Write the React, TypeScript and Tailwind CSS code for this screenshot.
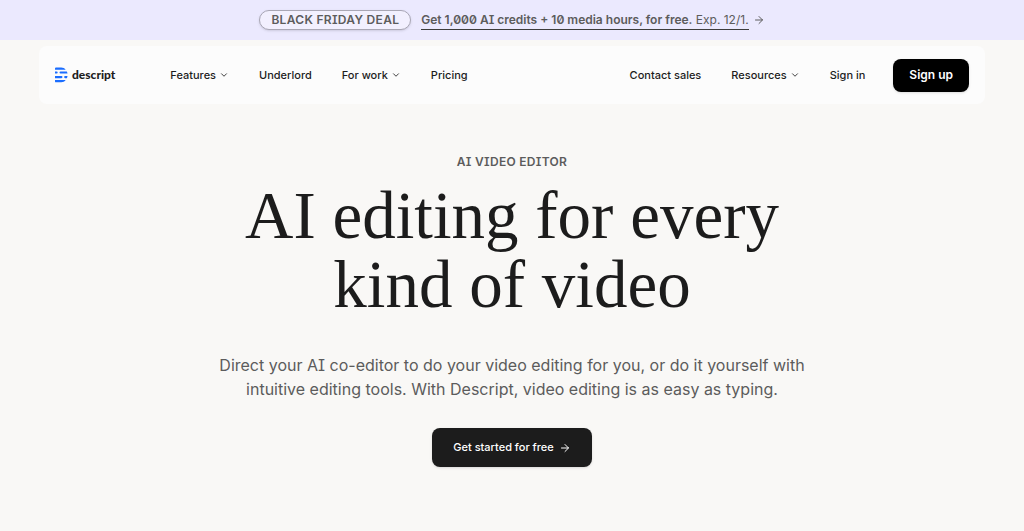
import { ArrowRight, ChevronDown } from "lucide-react";

type NavItem = { label: string; menu?: boolean };

const mainNav: NavItem[] = [
    { label: "Features", menu: true },
    { label: "Underlord" },
    { label: "For work", menu: true },
    { label: "Pricing" },
];

const accountNav: NavItem[] = [
    { label: "Contact sales" },
    { label: "Resources", menu: true },
    { label: "Sign in" },
];

function Logo() {
    return (
        <a href="#" className="flex items-center gap-1 text-[#1c1c1c]">
            <svg viewBox="0 0 13 16" className="h-4 w-[13px]" fill="#1a6dff" aria-hidden="true">
                <path d="M0 1.4C0 .8.4.5 1 .5h5.2c1.9 0 3.4.8 4.500 2.200H0z" />
                <path d="M0 4.400h1.600a1.100 1.100 0 0 1 0 2.200H0zM5.600 4.400h6.200c.4.700.6 1.400.7 2.200H5.600a1.100 1.100 0 0 1 0-2.200z" />
                <path d="M0 9h6.400a1.100 1.100 0 0 1 0 2.200H0zM10.200 9h2.300c-.1.800-.3 1.500-.7 2.200h-1.600a1.100 1.100 0 0 1 0-2.200z" />
                <path d="M0 13.100h10.700c-1.100 1.400-2.600 2.200-4.500 2.200H1c-.6 0-1-.3-1-.9z" />
            </svg>
            <span className="font-[Lato,sans-serif] text-xs leading-4 font-black">descript</span>
        </a>
    );
}

function NavLinks({ items }: { items: NavItem[] }) {
    return (
        <ul className="flex items-center gap-[30px]">
            {items.map((item) => (
                <li key={item.label}>
                    {item.menu ? (
                        <button type="button" className="flex items-center gap-[3px]">
                            {item.label}
                            <ChevronDown className="size-[10px]" />
                        </button>
                    ) : (
                        <a href="#">{item.label}</a>
                    )}
                </li>
            ))}
        </ul>
    );
}

export default function App() {
    return (
        <div className="min-h-screen bg-[#f9f8f6] font-[Inter,sans-serif] text-[#1c1c1c] [font-feature-settings:'cv08','zero']">
            {/* Promo banner */}
            <aside className="flex h-10 items-center justify-center bg-[#ebe9fe] text-xs text-[#5c5c5c]">
                <span className="mr-[10px] flex h-5 items-center rounded-full border border-[#a9a7b5] bg-[#f2f0fe] px-[11px] font-semibold tracking-wide shadow-sm">
                    BLACK FRIDAY DEAL
                </span>
                <a href="#" className="flex items-center gap-1">
                    <span className="border-b border-[#3c3c3c] leading-[18px]">
                        <b className="font-semibold">Get 1,000 AI credits + 10 media hours, for free.</b> Exp. 12/1.
                    </span>
                    <ArrowRight className="size-3" />
                </a>
            </aside>

            <header className="px-[39px] pt-[6px]">
                <nav className="flex h-[58px] items-center rounded-lg bg-[#fcfcfc] px-4 text-[11px] leading-4 font-medium">
                    <Logo />
                    <div className="ml-[55px] flex flex-1 items-center justify-between">
                        <NavLinks items={mainNav} />
                        <NavLinks items={accountNav} />
                    </div>
                    <button
                        type="button"
                        className="ml-7 h-[33px] rounded-lg bg-black px-4 text-xs font-semibold text-white shadow-sm"
                    >
                        Sign up
                    </button>
                </nav>
            </header>

            {/* Hero */}
            <main className="flex flex-col items-center px-6 pt-[50px] pb-16 text-center">
                <p className="text-xs leading-4 font-semibold tracking-wide text-[#5c5c5c]">AI VIDEO EDITOR</p>
                <h1 className="mt-[11px] max-w-[600px] font-['Liberation_Serif',serif] text-[67px] leading-[69px]">
                    AI editing for every kind of video
                </h1>
                <p className="mt-[34px] max-w-[610px] text-base leading-6 text-[#5c5c5c]">
                    Direct your AI co-editor to do your video editing for you, or do it yourself with intuitive editing
                    tools. With Descript, video editing is as easy as typing.
                </p>
                <button
                    type="button"
                    className="mt-[27px] flex h-[39px] items-center gap-[5px] rounded-lg bg-[#1c1c1c] px-[21px] text-[11px] font-medium text-white shadow-sm"
                >
                    Get started for free
                    <ArrowRight className="size-3" />
                </button>
            </main>
        </div>
    );
}
